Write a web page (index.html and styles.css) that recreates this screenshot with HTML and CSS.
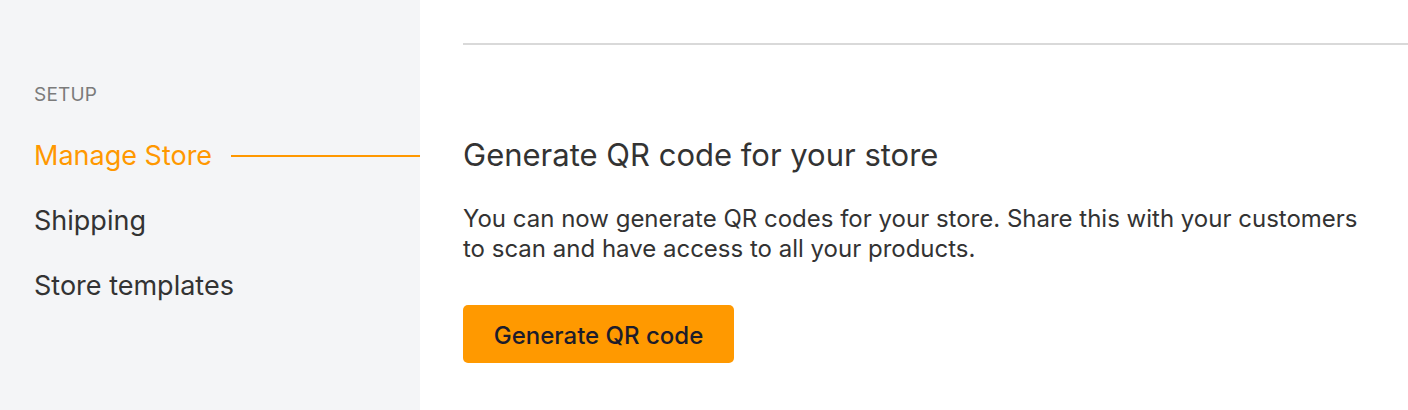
FILE: index.html
```html
<!DOCTYPE html>
<html lang="en">
<head>
<meta charset="utf-8">
<title>Manage Store</title>
<link rel="stylesheet" href="styles.css">
</head>
<body>
<div class="layout">
  <aside class="sidebar">
    <div class="section-label">SETUP</div>
    <nav class="nav">
      <a class="nav-item active" href="#"><span>Manage Store</span><span class="nav-line"></span></a>
      <a class="nav-item" href="#"><span>Shipping</span></a>
      <a class="nav-item" href="#"><span>Store templates</span></a>
    </nav>
  </aside>
  <main class="content">
    <div class="divider"></div>
    <section class="qr">
      <h2 class="qr-title">Generate QR code for your store</h2>
      <p class="qr-text">You can now generate QR codes for your store. Share this with your customers to scan and have access to all your products.</p>
      <button class="btn" type="button">Generate QR code</button>
    </section>
  </main>
</div>
</body>
</html>
```
FILE: styles.css
```css
* { box-sizing: border-box; }
html, body { margin: 0; padding: 0; }
body {
  font-family: Inter, "Liberation Sans", sans-serif;
  color: #333;
  background: #fff;
  width: 1408px;
  height: 410px;
  overflow: hidden;
}
.layout {
  display: flex;
  height: 410px;
}
.sidebar {
  width: 420px;
  flex: none;
  background: #f4f5f7;
  padding: 83px 0 0 34px;
}
.section-label {
  font-size: 19px;
  color: #7b7b7b;
  letter-spacing: 0.2px;
  line-height: 24px;
}
.nav {
  display: flex;
  flex-direction: column;
  margin-top: 16px;
}
.nav-item {
  display: flex;
  align-items: center;
  height: 65px;
  font-size: 27px;
  color: #333;
  text-decoration: none;
}
.nav-item.active { color: #ff9800; }
.nav-line {
  flex: 1;
  height: 2px;
  background: #ff9800;
  margin-left: 19px;
}
.content {
  flex: 1;
  padding-left: 43px;
}
.divider {
  margin-top: 43px;
  height: 2px;
  background: #d9d9d9;
}
.qr {
  padding-top: 90px;
  max-width: 900px;
}
.qr-title {
  margin: 0;
  font-size: 31px;
  font-weight: 400;
  line-height: 40px;
  color: #333;
}
.qr-text {
  margin: 29px 0 0;
  font-size: 24px;
  line-height: 30px;
  color: #333;
}
.btn {
  margin-top: 41px;
  width: 271px;
  height: 58px;
  padding: 3px 0 0;
  border: none;
  border-radius: 5px;
  background: #ff9900;
  color: #1c1c2b;
  font-family: inherit;
  font-size: 24px;
  font-weight: 500;
}
```
